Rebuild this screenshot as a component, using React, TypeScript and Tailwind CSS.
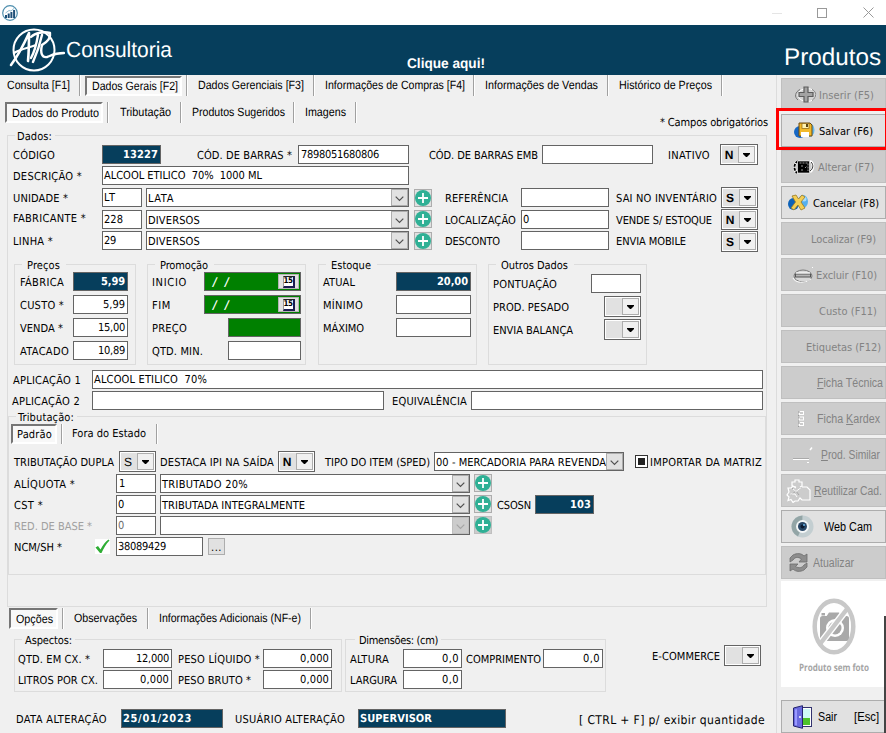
import React, { useLayoutEffect, useRef } from "react";
import clsx from "clsx";

interface BoxProps {
  className?: string;
  children?: React.ReactNode;
}

// Spreads its text evenly over the width given by the class name
const Txt: React.FC<BoxProps> = ({ className, children }) => {
  const box = useRef<HTMLSpanElement>(null);
  const inner = useRef<HTMLSpanElement>(null);

  useLayoutEffect(() => {
    if (!box.current || !inner.current) return;
    inner.current.style.letterSpacing = "0px";
    const free =
      box.current.getBoundingClientRect().width -
      inner.current.getBoundingClientRect().width;
    const count = inner.current.textContent?.length ?? 1;
    inner.current.style.letterSpacing = `${free / count}px`;
  });

  return (
    <span ref={box} className={clsx("block shrink-0 pt-[2px] whitespace-pre", className)}>
      <span ref={inner}>{children}</span>
    </span>
  );
};

// Same, but narrows the glyphs and leaves the spacing alone
const Slim: React.FC<BoxProps> = ({ className, children }) => {
  const box = useRef<HTMLSpanElement>(null);
  const inner = useRef<HTMLSpanElement>(null);

  useLayoutEffect(() => {
    if (!box.current || !inner.current) return;
    inner.current.style.transform = "none";
    const ratio =
      box.current.getBoundingClientRect().width /
      inner.current.getBoundingClientRect().width;
    inner.current.style.transform = `scaleX(${ratio})`;
  });

  return (
    <span ref={box} className={clsx("block shrink-0 whitespace-pre", className)}>
      <span ref={inner} className="inline-block origin-left">
        {children}
      </span>
    </span>
  );
};

const Field: React.FC<BoxProps> = ({ className, children }) => (
  <div
    className={clsx(
      "flex h-[19px] shrink-0 items-center border border-[#646464] pb-px leading-[14px]",
      className
    )}
  >
    {children}
  </div>
);

const Chevron: React.FC<{ disabled?: boolean }> = ({ disabled }) => (
  <span
    className={clsx(
      "ml-auto flex h-[17px] w-[17px] shrink-0 items-center justify-center border",
      disabled ? "border-[#bfbfbf] bg-[#ccc]" : "border-[#adadad] bg-[#e1e1e1]"
    )}
  >
    <svg width="9" height="6" viewBox="0 0 9 6" className="mt-[3px]">
      <path
        d="M0.7 0.7L4.5 4.5L8.3 0.7"
        fill="none"
        stroke={disabled ? "#a5a5a5" : "#505050"}
        strokeWidth="1.2"
      />
    </svg>
  </span>
);

const Select: React.FC<BoxProps & { disabled?: boolean }> = ({
  className,
  children,
  disabled,
}) => (
  <Field className={clsx("bg-white !pb-0 pl-px", className)}>
    {children}
    <Chevron disabled={disabled} />
  </Field>
);

const Combo: React.FC<{ value?: string; className?: string; thin?: boolean }> = ({
  value,
  className,
  thin,
}) => (
  <div
    className={clsx(
      "flex h-[21px] w-[37px] shrink-0 border border-[#646464] bg-white p-px",
      className
    )}
  >
    <span
      className={clsx(
        "flex w-[16px] items-center justify-center bg-[#e1e1e1] pr-[2px] font-['Liberation_Sans'] text-[12px]",
        !thin && "font-bold"
      )}
    >
      {value}
    </span>
    <span className="flex w-[17px] items-center justify-center border border-[#adadad] bg-[#f0f0f0]">
      <svg width="7" height="4" viewBox="0 0 7 4">
        <path d="M0 0H7V1L4 4H3L0 1Z" fill="#000" />
      </svg>
    </span>
  </div>
);

const PlusButton: React.FC<{ disabled?: boolean; className?: string }> = ({
  disabled,
  className,
}) => (
  <span
    className={clsx(
      "flex h-[18px] w-[18px] shrink-0 border",
      disabled ? "border-[#bfbfbf] bg-[#ccc]" : "border-[#adadad] bg-[#e1e1e1]",
      className
    )}
  >
    <svg width="16" height="16" viewBox="0 0 16 16">
      <circle cx="8" cy="8" r="8" fill="#2fb095" />
      <path d="M8 3V13M3 8H13" stroke="#fff" strokeWidth="1.8" />
    </svg>
  </span>
);

const Group: React.FC<BoxProps & { title: string; legend: string; text: string }> = ({
  title,
  legend,
  text,
  className,
  children,
}) => (
  <fieldset className={clsx("min-w-0 shrink-0 border border-[#dcdcdc]", className)}>
    <legend className={clsx("block h-[13px] leading-[13px]", legend)}>
      <Txt className={clsx("!pt-px", text)}>{title}</Txt>
    </legend>
    {children}
  </fieldset>
);

const ActiveTab: React.FC<BoxProps> = ({ className, children }) => (
  <div
    className={clsx(
      "shrink-0 border-2 border-t-[#767676] border-r-white border-b-white border-l-[#767676] bg-[#f8f8f8]",
      className
    )}
  >
    {children}
  </div>
);

const Sep: React.FC<{ className?: string }> = ({ className }) => (
  <span
    className={clsx("block w-[2px] shrink-0 border-l border-[#a0a0a0] bg-white", className)}
  />
);

const DateField: React.FC<{ className?: string }> = ({ className }) => (
  <Field className={clsx("w-[97px] bg-[#008000] !pb-0 pl-[8px] text-white", className)}>
    <span className="w-[6px] text-[12px] font-bold italic">/</span>
    <span className="ml-[6px] w-[6px] text-[12px] font-bold italic">/</span>
    <span className="ml-auto mr-px flex h-[15px] w-[21px] items-center justify-center border border-[#b4b4b4] bg-[#e1e1e1]">
      <span className="flex h-[12px] w-[12px] items-center justify-center border-t border-r-2 border-b-2 border-l border-t-[#222] border-r-[#1c1c50] border-b-[#1c1c50] border-l-[#999] bg-white text-[8px] font-bold leading-none tracking-[-0.5px] text-black">
        15
      </span>
    </span>
  </Field>
);

const SideButton: React.FC<BoxProps & { disabled?: boolean }> = ({
  disabled,
  className,
  children,
}) => (
  <button
    className={clsx(
      "flex h-[33px] w-[105px] shrink-0 items-center border text-left",
      disabled
        ? "border-[#bfbfbf] bg-[#ccc] text-[#838383]"
        : "border-[#adadad] bg-[#e1e1e1] text-black",
      className
    )}
  >
    {children}
  </button>
);

const InsertIcon = () => (
  <svg width="22" height="18" viewBox="0 0 22 18">
    <ellipse cx="12" cy="9" rx="9" ry="6.500" fill="#d4d4d4" stroke="#fff" />
    <path d="M5 3.500C0 6 -1 11 3 14M17 3.500C22 6 22 11 17 14.500" fill="none" stroke="#777" />
    <path
      d="M9 1H13V6.500H18V10.500H13V16H9V10.500H4V6.500H9Z"
      fill="#a2a2a2"
      stroke="#5c5c5c"
      strokeWidth="1.2"
    />
  </svg>
);

const SaveIcon = () => (
  <svg width="22" height="18" viewBox="0 0 22 18">
    <ellipse cx="6" cy="10" rx="6" ry="6" fill="#1667c4" />
    <ellipse cx="15" cy="8" rx="5.5" ry="7" fill="#66b8ee" />
    <path d="M5 1H16L18 3V14H5Z" fill="#f2b92a" stroke="#6b4a10" />
    <rect x="8" y="1.5" width="7" height="5" fill="#fff2b0" stroke="#8a6010" strokeWidth=".7" />
    <rect x="12" y="2" width="2" height="3" fill="#5b4413" />
    <rect x="7" y="10" width="8" height="5" fill="#fff" />
  </svg>
);

const EditIcon = () => (
  <svg width="22" height="18" viewBox="0 0 22 18">
    <path d="M5 3C1 5 0 11 4 15M17 3C21 5 21 11 17 14" fill="none" stroke="#fff" strokeWidth="2.5" />
    <path d="M5 3C1 5 0 11 4 15" fill="none" stroke="#000" strokeWidth="1.8" strokeDasharray="3 1" />
    <path d="M18 4C21 7 20 11 17 13" fill="none" stroke="#333" />
    <rect x="4.500" y="3" width="12" height="12" fill="#000" stroke="#fff" strokeWidth=".6" />
    <path d="M6.500 5H15V13M8 8H11M12 10L14 8M8 12H10" fill="none" stroke="#999" strokeDasharray="2 1" />
  </svg>
);

const CancelIcon = () => (
  <svg width="21" height="18" viewBox="0 0 21 18">
    <ellipse cx="5.5" cy="10" rx="5.5" ry="6" fill="#0e62b8" />
    <ellipse cx="15" cy="7.5" rx="5" ry="6.5" fill="#56b0ee" />
    <ellipse cx="16" cy="5" rx="2.5" ry="2.5" fill="#a9dcfa" />
    <path
      d="M4 2L8 1L10.500 5L14 1L17 3L13 8L17 14L13 16L10 11L6 16L3 14L7.500 8Z"
      fill="#f4cf55"
      stroke="#9a7a24"
      strokeWidth=".8"
    />
  </svg>
);

const DeleteIcon = () => (
  <svg width="24" height="18" viewBox="0 0 24 18">
    <ellipse cx="12" cy="10" rx="9" ry="6" fill="#d8d8d8" stroke="#777" />
    <path d="M2 12C4 17 14 18 20 13" fill="none" stroke="#fff" />
    <rect x="4.500" y="8" width="15" height="3" fill="#b5b5b5" stroke="#555" />
    <path d="M5 7H19" stroke="#fff" />
    <path d="M21 1.500H22" stroke="#fff" />
  </svg>
);

const KardexIcon = () => (
  <svg width="7" height="17" viewBox="0 0 7 17">
    {[1, 6.5, 12].map((y) => (
      <g key={y}>
        <rect x="1.500" y={y + 0.5} width="4" height="3" fill="#ccc" stroke="#fff" />
        <path d="M1 0V2M0.500 4V5" transform={`translate(0 ${y})`} stroke="#999" />
      </g>
    ))}
  </svg>
);

const SimilarIcon = () => (
  <svg width="21" height="18" viewBox="0 0 21 18">
    <path d="M0 13.500H16M14 16.500H16" stroke="#fff" />
    <path d="M0 12.500H16" stroke="#aaa" />
    <path d="M17 4L19 1.500" stroke="#fff" strokeWidth="1.500" />
  </svg>
);

const ReuseIcon = () => (
  <svg width="25" height="24" viewBox="0 0 25 24">
    <path
      d="M10 8L6 7V3H9V1H13V3H16V7L14 8M16 8H21L24 11V21H16L14 19L12 22H9L7 23.500L5 20.500L2 21.500L3 18L1 16L3 13L2 9L5 9L7 7L10 9"
      fill="none"
      stroke="#fff"
      strokeWidth="1.200"
    />
    <path d="M6 9L10 13L15 8M5 16L10 12L13 16" fill="none" stroke="#a5a5a5" />
    <path d="M7 10L10 12.500L15 8.500M4.500 15L9 15L11 18" fill="none" stroke="#fff" />
  </svg>
);

const WebcamIcon = () => (
  <svg width="23" height="23" viewBox="0 0 23 23">
    <circle cx="11.500" cy="11.500" r="11" fill="#c3ced1" />
    <path d="M11.500 .5A11 11 0 0 0 7 21.500L11 12Z" fill="#93a5a6" />
    <circle cx="11.500" cy="11.500" r="6.500" fill="#f4f7f8" />
    <circle cx="11.500" cy="11.500" r="4.500" fill="#294766" />
    <circle cx="11.500" cy="11.500" r="2" fill="#0b1a30" />
    <circle cx="13" cy="10" r="1" fill="#68b5e8" />
  </svg>
);

const RefreshIcon = () => (
  <svg width="19" height="19" viewBox="0 0 19 19">
    <path
      d="M1 9V5L4 2C8 0 12 0 15 3L18 1V9H10L12.500 6C9 3.500 6 4 4 7Z"
      fill="#8d8d8d"
      stroke="#6d6d6d"
      strokeWidth=".8"
    />
    <path
      d="M18 10V14L15 17C11 19 7 19 4 16L1 18V11H9L6.500 13.500C10 15.500 13 15 15 12Z"
      fill="#8d8d8d"
      stroke="#6d6d6d"
      strokeWidth=".8"
    />
  </svg>
);

const NoPhotoIcon = () => (
  <svg width="44" height="57" viewBox="0 0 44 57">
    <rect x="8" y="18" width="29" height="25" rx="2.500" fill="#a9a9a9" />
    <path d="M14 19L17 14.500H27L30 19ZM9.500 15H13V17.500H9.500Z" fill="#a9a9a9" />
    <circle cx="23" cy="30" r="9" fill="#fff" />
    <circle cx="23" cy="30" r="6.500" fill="#a9a9a9" />
    <path d="M8 46L35 11" stroke="#fff" strokeWidth="7" />
    <path d="M8 46L35 11" stroke="#c8c8c8" strokeWidth="4.500" />
    <ellipse cx="22" cy="28.500" rx="19.300" ry="25.800" fill="none" stroke="#c8c8c8" strokeWidth="4.500" />
  </svg>
);

const ExitIcon = () => (
  <svg width="19" height="24" viewBox="0 0 19 24">
    <rect x="7.500" y="2.500" width="11" height="19" fill="#fff" stroke="#33336f" />
    <rect x="10" y="4" width="7" height="9" fill="#cffaf6" />
    <rect x="10" y="13" width="7" height="7" fill="#4dc22a" />
    <path d="M.5 3L9.500 .7V23.300L.5 21Z" fill="#6a6ade" stroke="#24246e" />
    <path d="M2 4.500L4 4V20.500L2 20Z" fill="#9a9aff" />
    <circle cx="7" cy="12" r="1" fill="#fff" />
  </svg>
);

const ui = "font-['DejaVu_Sans_Condensed','DejaVu_Sans',sans-serif] text-[11px]";
const ms = "font-['Liberation_Sans',sans-serif] text-[12px]";
const navy = "bg-[#063e5c] font-bold text-white";

const TitleBar = () => (
  <div className="flex h-[25px] items-center bg-white pl-[2px]">
    <svg width="16" height="16" viewBox="0 0 16 16">
      <circle cx="8" cy="8" r="7.300" fill="#fff" stroke="#4f8fae" strokeWidth="1.200" />
      <path d="M4 13V10M6.700 13V8.500M9.400 13V7M12.100 13V5" stroke="#1d4f78" strokeWidth="2" />
      <path d="M3.500 8L7 5.500L9 6L12.500 3" fill="none" stroke="#74a9c4" strokeWidth=".8" />
    </svg>
    <svg width="10" height="10" viewBox="0 0 10 10" className="ml-[754px]">
      <path d="M0 5.500H10" stroke="#e5e5e5" />
    </svg>
    <svg width="10" height="10" viewBox="0 0 10 10" className="ml-[35px]">
      <rect x=".5" y=".5" width="9" height="9" fill="none" stroke="#999" />
    </svg>
    <svg width="11" height="11" viewBox="0 0 11 11" className="ml-[36px]">
      <path d="M.5 .5L10.500 10.500M10.500 .5L.5 10.500" stroke="#999" />
    </svg>
  </div>
);

const Header = () => (
  <div className="flex h-[50px] bg-[#063e5c] pl-[9px] font-['Liberation_Sans',sans-serif] text-white">
    <svg width="56" height="46" viewBox="0 0 56 46" className="mt-[2px] shrink-0">
      <g fill="none" stroke="#fff" strokeLinecap="round" strokeLinejoin="round">
        <circle cx="25" cy="23" r="20.500" strokeWidth="2" />
        <path d="M2 38C8 30 15 17 20 6C20 16 20 24 19 34" strokeWidth="2.600" />
        <path d="M5 26C11 22 19 21 27 18" strokeWidth="2.200" />
        <path d="M22 31C26 24 28 14 29 8M22 10C26 6 35 4 41 6C42 11 38 15 33 18" strokeWidth="2.400" />
        <path d="M33 8C31 17 28 26 24 35M33 18C31 26 33 31 38 30C42 29 44 26 55 26" strokeWidth="2.400" />
      </g>
    </svg>
    <Slim className="ml-[1px] mt-[12px] h-[26px] w-[106px] text-[22px] leading-[26px]">
      Consultoria
    </Slim>
    <Slim className="ml-[235px] mt-[30px] w-[78px] text-[14px] font-bold leading-[16px]">
      Clique aqui!
    </Slim>
    <Slim className="ml-[299px] mt-[18px] w-[97px] text-[24px] leading-[30px]">Produtos</Slim>
  </div>
);

const MainTabs = () => (
  <div className={clsx("flex h-[27px] pl-[7px] leading-[20px]", ms)}>
    <Slim className="w-[63px]">Consulta [F1]</Slim>
    <Sep className="ml-[9px] h-[21px]" />
    <ActiveTab className="ml-[4px] mt-px h-[20px] w-[97px] pl-[5px] leading-[17px]">
      <Slim className="w-[86px]">Dados Gerais [F2]</Slim>
    </ActiveTab>
    <Sep className="ml-[4px] h-[21px]" />
    <Slim className="ml-[10px] w-[106px]">Dados Gerenciais [F3]</Slim>
    <Sep className="ml-[9px] h-[21px]" />
    <Slim className="ml-[10px] w-[140px]">Informações de Compras [F4]</Slim>
    <Sep className="ml-[8px] h-[21px]" />
    <Slim className="ml-[10px] w-[113px]">Informações de Vendas</Slim>
    <Sep className="ml-[9px] h-[21px]" />
    <Slim className="ml-[10px] w-[93px]">Histórico de Preços</Slim>
    <Sep className="ml-[9px] h-[21px]" />
  </div>
);

const SubTabs = () => (
  <div className={clsx("flex h-[27px] pl-[5px] leading-[20px]", ms)}>
    <ActiveTab className="h-[21px] w-[98px] pl-[5px] leading-[18px]">
      <Slim className="w-[87px]">Dados do Produto</Slim>
    </ActiveTab>
    <Sep className="ml-[4px] h-[21px]" />
    <Slim className="ml-[11px] w-[51px]">Tributação</Slim>
    <Sep className="ml-[9px] h-[21px]" />
    <Slim className="ml-[10px] w-[93px]">Produtos Sugeridos</Slim>
    <Sep className="ml-[8px] h-[21px]" />
    <Slim className="ml-[10px] w-[41px]">Imagens</Slim>
    <Sep className="ml-[9px] h-[21px]" />
    <Txt className={clsx("ml-[303px] mt-[12px] w-[108px] !leading-[14px]", ui)}>
      * Campos obrigatórios
    </Txt>
  </div>
);

const ProductRows = () => (
  <>
    <div className="mt-[2px] flex h-[21px] items-center pl-[5px]">
      <Txt className="w-[42px]">CÓDIGO</Txt>
      <Field className={clsx("ml-[47px] w-[59px] justify-end pr-[2px]", navy)}>
        <Txt className="w-[35px]">13227</Txt>
      </Field>
      <Txt className="ml-[36px] w-[95px]">CÓD. DE BARRAS *</Txt>
      <Field className="ml-[6px] w-[111px] bg-white pl-[2px]">
        <Txt className="w-[78px]">7898051680806</Txt>
      </Field>
      <Txt className="ml-[20px] w-[109px]">CÓD. DE BARRAS EMB</Txt>
      <Field className="ml-[4px] w-[111px] bg-white" />
      <Txt className="ml-[15px] w-[42px]">INATIVO</Txt>
      <Combo className="ml-[10px] !w-[38px]" value="N" />
    </div>
    <div className="mt-px flex h-[19px] items-center pl-[5px]">
      <Txt className="w-[69px]">DESCRIÇÃO *</Txt>
      <Field className="ml-[20px] w-[307px] bg-white pl-px">
        <Txt className="w-[158px]">ALCOOL ETILICO  70%  1000 ML</Txt>
      </Field>
    </div>
    <div className="mt-[2px] flex h-[21px] items-center pl-[5px]">
      <Txt className="w-[55px]">UNIDADE *</Txt>
      <Field className="ml-[34px] w-[40px] bg-white pl-px">
        <Txt className="w-[12px]">LT</Txt>
      </Field>
      <Select className="ml-[4px] w-[263px]">
        <Txt className="w-[26px]">LATA</Txt>
      </Select>
      <PlusButton className="ml-[5px] mt-px" />
      <Txt className="ml-[13px] w-[63px]">REFERÊNCIA</Txt>
      <Field className="ml-[13px] w-[88px] bg-white" />
      <Txt className="ml-[7px] w-[101px]">SAI NO INVENTÁRIO</Txt>
      <Combo className="ml-[4px]" value="S" />
    </div>
    <div className="mt-px flex h-[21px] items-center pl-[5px]">
      <Txt className="-mt-[3px] w-[73px]">FABRICANTE *</Txt>
      <Field className="ml-[16px] w-[40px] bg-white pl-px">
        <Txt className="w-[19px]">228</Txt>
      </Field>
      <Select className="ml-[4px] w-[263px]">
        <Txt className="w-[52px]">DIVERSOS</Txt>
      </Select>
      <PlusButton className="ml-[5px] -mt-px" />
      <Txt className="ml-[13px] w-[71px]">LOCALIZAÇÃO</Txt>
      <Field className="ml-[5px] w-[88px] bg-white pl-px">
        <Txt className="w-[7px]">0</Txt>
      </Field>
      <Txt className="ml-[7px] w-[96px]">VENDE S/ ESTOQUE</Txt>
      <Combo className="ml-[9px]" value="N" />
    </div>
    <div className="flex h-[21px] items-center pl-[5px]">
      <Txt className="w-[40px]">LINHA *</Txt>
      <Field className="ml-[49px] w-[40px] bg-white pl-px">
        <Txt className="w-[12px]">29</Txt>
      </Field>
      <Select className="ml-[4px] w-[263px]">
        <Txt className="w-[52px]">DIVERSOS</Txt>
      </Select>
      <PlusButton className="ml-[5px]" />
      <Txt className="ml-[13px] w-[55px]">DESCONTO</Txt>
      <Field className="ml-[21px] w-[88px] bg-white" />
      <Txt className="ml-[7px] w-[70px]">ENVIA MOBILE</Txt>
      <Combo className="ml-[35px] mt-[2px]" value="S" />
    </div>
  </>
);

const Prices = () => (
  <Group
    title="Preços"
    legend="ml-[2px] pl-[5px] pr-[6px]"
    text="w-[33px]"
    className="h-[107px] w-[122px] pr-[7px] pl-[5px]"
  >
    <div className="mt-px flex flex-col gap-[4px]">
      <div className="flex items-center justify-between">
        <Txt className="w-[44px]">FÁBRICA</Txt>
        <Field className={clsx("w-[55px] justify-end pr-[2px]", navy)}>
          <Txt className="w-[24px]">5,99</Txt>
        </Field>
      </div>
      <div className="flex items-center justify-between">
        <Txt className="w-[44px]">CUSTO *</Txt>
        <Field className="w-[55px] justify-end bg-white pr-[2px]">
          <Txt className="w-[22px]">5,99</Txt>
        </Field>
      </div>
      <div className="flex items-center justify-between">
        <Txt className="w-[43px]">VENDA *</Txt>
        <Field className="w-[55px] justify-end bg-white pr-[2px]">
          <Txt className="w-[27px]">15,00</Txt>
        </Field>
      </div>
      <div className="flex items-center justify-between">
        <Txt className="w-[49px]">ATACADO</Txt>
        <Field className="w-[55px] justify-end bg-white pr-[2px]">
          <Txt className="w-[27px]">10,89</Txt>
        </Field>
      </div>
    </div>
  </Group>
);

const Promotion = () => (
  <Group
    title="Promoção"
    legend="ml-[3px] pl-[5px] pr-[6px]"
    text="w-[48px]"
    className="ml-[11px] h-[107px] w-[159px] pr-[4px] pl-[4px]"
  >
    <div className="mt-px flex flex-col gap-[4px]">
      <div className="flex items-center justify-between">
        <Txt className="w-[35px]">INICIO</Txt>
        <DateField />
      </div>
      <div className="flex items-center justify-between">
        <Txt className="w-[19px]">FIM</Txt>
        <DateField />
      </div>
      <div className="flex items-center justify-between">
        <Txt className="w-[35px]">PREÇO</Txt>
        <Field className="w-[73px] bg-[#008000]" />
      </div>
      <div className="flex items-center justify-between">
        <Txt className="w-[51px]">QTD. MIN.</Txt>
        <Field className="w-[73px] bg-white" />
      </div>
    </div>
  </Group>
);

const Stock = () => (
  <Group
    title="Estoque"
    legend="ml-[3px] pl-[5px] pr-[6px]"
    text="w-[40px]"
    className="ml-[12px] h-[107px] w-[159px] pr-[5px] pl-[4px]"
  >
    <div className="mt-px flex flex-col gap-[4px]">
      <div className="flex items-center justify-between">
        <Txt className="w-[32px]">ATUAL</Txt>
        <Field className={clsx("w-[75px] justify-end pr-[2px]", navy)}>
          <Txt className="w-[31px]">20,00</Txt>
        </Field>
      </div>
      <div className="flex items-center justify-between">
        <Txt className="w-[40px]">MÍNIMO</Txt>
        <Field className="w-[75px] bg-white" />
      </div>
      <div className="flex items-center justify-between">
        <Txt className="w-[41px]">MÁXIMO</Txt>
        <Field className="w-[75px] bg-white" />
      </div>
    </div>
  </Group>
);

const Others = () => (
  <Group
    title="Outros Dados"
    legend="ml-[3px] pl-[5px] pr-[6px]"
    text="w-[67px]"
    className="ml-[11px] h-[107px] w-[159px] pr-[5px] pl-[4px]"
  >
    <div className="mt-[3px] flex items-center justify-between">
      <Txt className="w-[64px]">PONTUAÇÃO</Txt>
      <Field className="w-[50px] bg-white" />
    </div>
    <div className="mt-[3px] flex items-center justify-between">
      <Txt className="w-[76px]">PROD. PESADO</Txt>
      <Combo />
    </div>
    <div className="mt-[2px] flex items-center justify-between">
      <Txt className="w-[80px]">ENVIA BALANÇA</Txt>
      <Combo />
    </div>
  </Group>
);

const Taxes = () => (
  <Group
    title="Tributação:"
    legend="ml-[7px] pl-[2px] pr-[3px]"
    text="w-[56px]"
    className="h-[165px] w-full"
  >
    <div className="mt-px flex h-[20px] pl-[2px]">
      <ActiveTab className="h-[20px] w-[46px] pl-[4px]">
        <Txt className="w-[35px]">Padrão</Txt>
      </ActiveTab>
      <Sep className="ml-[4px]" />
      <Txt className="ml-[9px] w-[74px] !pt-[3px]">Fora do Estado</Txt>
      <Sep className="ml-[10px]" />
    </div>
    <div className="mt-[7px] flex h-[21px] items-center pl-[5px]">
      <Txt className="w-[100px]">TRIBUTAÇÃO DUPLA</Txt>
      <Combo className="ml-[5px]" value="S" thin />
      <Txt className="ml-[4px] w-[114px]">DESTACA IPI NA SAÍDA</Txt>
      <Combo className="ml-[4px]" value="N" />
      <Txt className="ml-[10px] w-[105px]">TIPO DO ITEM (SPED)</Txt>
      <Select className="ml-[4px] w-[190px]">
        <Txt className="w-[170px]">00 - MERCADORIA PARA REVENDA</Txt>
      </Select>
      <span className="-mt-px ml-[11px] flex h-[13px] w-[13px] shrink-0 items-center justify-center border border-[#333] bg-white">
        <span className="h-[7px] w-[7px] bg-[#222]" />
      </span>
      <Txt className="ml-[2px] w-[112px]">IMPORTAR DA MATRIZ</Txt>
    </div>
    <div className="mt-[2px] flex h-[19px] items-center pl-[5px]">
      <Txt className="w-[61px]">ALÍQUOTA *</Txt>
      <Field className="ml-[41px] w-[40px] bg-white pl-[2px]">
        <Txt className="w-[7px]">1</Txt>
      </Field>
      <Select className="ml-[4px] w-[310px]">
        <Txt className="w-[86px]">TRIBUTADO 20%</Txt>
      </Select>
      <PlusButton className="ml-[4px] -mt-px" />
    </div>
    <div className="mt-[2px] flex h-[19px] items-center pl-[5px]">
      <Txt className="w-[29px]">CST *</Txt>
      <Field className="ml-[73px] w-[40px] bg-white pl-px">
        <Txt className="w-[7px]">0</Txt>
      </Field>
      <Select className="ml-[4px] w-[310px]">
        <Txt className="w-[143px]">TRIBUTADA INTEGRALMENTE</Txt>
      </Select>
      <PlusButton className="ml-[4px] -mt-px" />
      <Txt className="ml-[5px] w-[34px]">CSOSN</Txt>
      <Field className={clsx("ml-[4px] w-[59px] justify-end pr-[2px]", navy)}>
        <Txt className="w-[21px]">103</Txt>
      </Field>
    </div>
    <div className="mt-[2px] flex h-[19px] items-center pl-[5px]">
      <Txt className="w-[78px] text-[#a0a0a0]">RED. DE BASE *</Txt>
      <Field className="ml-[24px] w-[40px] bg-white pl-px text-[#6d6d6d]">
        <Txt className="w-[7px]">0</Txt>
      </Field>
      <Select className="ml-[4px] w-[310px]" disabled />
      <PlusButton className="ml-[4px] -mt-px" disabled />
    </div>
    <div className="mt-[2px] flex h-[19px] items-center pl-[5px]">
      <Txt className="w-[48px]">NCM/SH *</Txt>
      <span className="ml-[33px] flex h-[15px] w-[15px] shrink-0 bg-white">
        <svg width="15" height="15" viewBox="0 0 15 15">
          <path
            d="M.5 8.500L3 7L5.500 10.500C8 6 10.500 2.500 13.500 .5L14.500 1.500C11 5 8.500 9.500 6.500 14H5Z"
            fill="#2fae35"
          />
        </svg>
      </span>
      <Field className="ml-[6px] w-[87px] bg-white pl-px">
        <Txt className="w-[48px]">38089429</Txt>
      </Field>
      <span className="ml-[5px] flex h-[17px] w-[17px] shrink-0 items-center justify-center border border-[#adadad] bg-[#e1e1e1]">
        <Txt className="w-[11px]">...</Txt>
      </span>
    </div>
  </Group>
);

const OptionTabs = () => (
  <div className={clsx("mt-px flex h-[21px] pl-[9px] leading-[20px]", ms)}>
    <ActiveTab className="h-[21px] w-[49px] pl-[5px] leading-[18px]">
      <Slim className="w-[37px]">Opções</Slim>
    </ActiveTab>
    <Sep className="ml-[4px]" />
    <Slim className="ml-[10px] w-[63px]">Observações</Slim>
    <Sep className="ml-[10px]" />
    <Slim className="ml-[10px] w-[142px]">Informações Adicionais (NF-e)</Slim>
    <Sep className="ml-[9px]" />
  </div>
);

const NumberField: React.FC<{ box: string; text: string; value: string }> = ({
  box,
  text,
  value,
}) => (
  <Field className={clsx("justify-end bg-white pr-[2px]", box)}>
    <Txt className={text}>{value}</Txt>
  </Field>
);

const Options = () => (
  <div className="mt-[4px] flex h-[59px] pl-[14px]">
    <Group
      title="Aspectos:"
      legend="ml-[4px] pl-[3px] pr-[3px]"
      text="w-[47px]"
      className="w-[328px] pl-[3px]"
    >
      <div className="mt-[3px] flex h-[19px] items-center">
        <Txt className="w-[72px]">QTD. EM CX. *</Txt>
        <NumberField box="ml-[13px] w-[69px]" text="w-[33px]" value="12,000" />
        <Txt className="ml-[6px] w-[82px]">PESO LÍQUIDO *</Txt>
        <NumberField box="ml-[3px] w-[69px]" text="w-[29px]" value="0,000" />
      </div>
      <div className="mt-[2px] flex h-[19px] items-center">
        <Txt className="w-[80px]">LITROS POR CX.</Txt>
        <NumberField box="ml-[5px] w-[69px]" text="w-[29px]" value="0,000" />
        <Txt className="ml-[6px] w-[73px]">PESO BRUTO *</Txt>
        <NumberField box="ml-[12px] w-[69px]" text="w-[29px]" value="0,000" />
      </div>
    </Group>
    <Group
      title="Dimensões: (cm)"
      legend="ml-[5px] pl-[4px] pr-[3px]"
      text="w-[79px]"
      className="ml-[3px] w-[261px] pl-[4px]"
    >
      <div className="mt-[3px] flex h-[19px] items-center">
        <Txt className="w-[39px]">ALTURA</Txt>
        <NumberField box="ml-[14px] w-[59px]" text="w-[17px]" value="0,0" />
        <Txt className="ml-[4px] w-[75px]">COMPRIMENTO</Txt>
        <NumberField box="ml-[2px] w-[60px]" text="w-[17px]" value="0,0" />
      </div>
      <div className="mt-[2px] flex h-[19px] items-center">
        <Txt className="w-[47px]">LARGURA</Txt>
        <NumberField box="ml-[6px] w-[59px]" text="w-[17px]" value="0,0" />
      </div>
    </Group>
    <div className="ml-[46px] mt-[12px] flex h-[21px] items-center">
      <Txt className="w-[68px]">E-COMMERCE</Txt>
      <Combo className="ml-[4px]" />
    </div>
  </div>
);

const FooterRow = () => (
  <div className="mt-[17px] flex h-[19px] items-center pl-[16px]">
    <Txt className="w-[91px]">DATA ALTERAÇÃO</Txt>
    <Field className={clsx("ml-[14px] w-[102px] pl-px", navy)}>
      <Txt className="w-[69px]">25/01/2023</Txt>
    </Field>
    <Txt className="ml-[12px] w-[110px]">USUÁRIO ALTERAÇÃO</Txt>
    <Field className={clsx("ml-[13px] w-[148px] pl-px", navy)}>
      <Txt className="w-[72px]">SUPERVISOR</Txt>
    </Field>
    <Txt className="ml-[73px] w-[186px] text-[12px]">[ CTRL + F] p/ exibir quantidade</Txt>
  </div>
);

const Sidebar = () => (
  <div className="flex w-[110px] shrink-0 flex-col border-l border-[#dcdcdc] pl-[4px] pt-[3px]">
    <div className="flex flex-col gap-[3px]">
      <SideButton disabled className="pl-[13px]">
        <InsertIcon />
        <Txt className="ml-[2px] w-[55px]">Inserir (F5)</Txt>
      </SideButton>
      <div className="relative">
        <SideButton className="pl-[12px]">
          <SaveIcon />
          <Txt className="ml-[3px] w-[54px]">Salvar (F6)</Txt>
        </SideButton>
        <span className="absolute -top-[6px] -left-[5px] h-[42px] w-[112px] border-[3px] border-[#f00]" />
      </div>
      <SideButton disabled className="pl-[11px]">
        <EditIcon />
        <Txt className="ml-[3px] w-[56px]">Alterar (F7)</Txt>
      </SideButton>
      <SideButton className="pl-[6px]">
        <CancelIcon />
        <Txt className="ml-[4px] w-[66px]">Cancelar (F8)</Txt>
      </SideButton>
      <SideButton disabled className="pl-[29px]">
        <Txt className="w-[65px]">Localizar (F9)</Txt>
      </SideButton>
      <SideButton disabled className="pl-[9px]">
        <DeleteIcon />
        <Txt className="ml-px w-[61px]">Excluir (F10)</Txt>
      </SideButton>
      <SideButton disabled className="pl-[37px]">
        <Txt className="w-[58px]">Custo (F11)</Txt>
      </SideButton>
      <SideButton disabled className="pl-[24px]">
        <Txt className="w-[75px]">Etiquetas (F12)</Txt>
      </SideButton>
      <SideButton disabled className={clsx("pl-[35px]", ms)}>
        <Slim className="w-[66px]">
          <u>F</u>icha Técnica
        </Slim>
      </SideButton>
      <SideButton disabled className={clsx("pl-[16px]", ms)}>
        <KardexIcon />
        <Slim className="ml-[12px] w-[63px]">
          Ficha <u>K</u>ardex
        </Slim>
      </SideButton>
      <SideButton disabled className={clsx("pl-[11px]", ms)}>
        <SimilarIcon />
        <Slim className="ml-[7px] w-[59px]">
          <u>P</u>rod. Similar
        </Slim>
      </SideButton>
      <SideButton disabled className={clsx("pl-[4px]", ms)}>
        <ReuseIcon />
        <Slim className="ml-[3px] w-[68px]">
          <u>R</u>eutilizar Cad.
        </Slim>
      </SideButton>
      <SideButton className={clsx("pl-[9px]", ms)}>
        <WebcamIcon />
        <Slim className="ml-[10px] w-[48px]">Web Cam</Slim>
      </SideButton>
      <SideButton disabled className={clsx("pl-[7px]", ms)}>
        <RefreshIcon />
        <Slim className="ml-[5px] w-[41px]">Atualizar</Slim>
      </SideButton>
    </div>
    <div className="relative mt-[2px] flex h-[106px] w-[105px] flex-col items-center bg-white pt-[17px]">
      <NoPhotoIcon />
      <Slim className="mt-[5px] w-[70px] font-['Open_Sans'] text-[10px] font-bold leading-[14px] text-[#a5a5a5]">
        Produto sem foto
      </Slim>
      <span className="absolute top-[35px] right-0 h-[118px] w-[2px] bg-[#444]" />
    </div>
    <SideButton className={clsx("mt-[13px] pl-[11px]", ms)}>
      <ExitIcon />
      <Slim className="ml-[6px] w-[19px]">Sair</Slim>
      <Slim className="ml-[17px] w-[25px]">[Esc]</Slim>
    </SideButton>
  </div>
);

const App = () => (
  <div
    className={clsx(
      "flex h-[733px] w-[886px] flex-col overflow-hidden bg-[#f0f0f0] leading-[14px] text-black [text-rendering:geometricPrecision]",
      ui
    )}
  >
    <TitleBar />
    <Header />
    <div className="flex h-[658px]">
      <div className="w-[776px] shrink-0">
        <MainTabs />
        <SubTabs />
        <Group
          title="Dados:"
          legend="ml-[7px] pl-[2px] pr-[3px]"
          text="w-[35px]"
          className="ml-[7px] h-[478px] w-[760px]"
        >
          <ProductRows />
          <div className="mt-[7px] flex pl-[6px]">
            <Prices />
            <Promotion />
            <Stock />
            <Others />
          </div>
          <div className="mt-[5px] flex h-[19px] items-center pl-[5px]">
            <Txt className="w-[68px]">APLICAÇÃO 1</Txt>
            <Field className="ml-[11px] w-[671px] bg-white pl-px">
              <Txt className="w-[113px]">ALCOOL ETILICO  70%</Txt>
            </Field>
          </div>
          <div className="mt-[2px] flex h-[19px] items-center pl-[4px]">
            <Txt className="w-[68px]">APLICAÇÃO 2</Txt>
            <Field className="ml-[12px] w-[292px] bg-white" />
            <Txt className="ml-[8px] w-[75px]">EQUIVALÊNCIA</Txt>
            <Field className="ml-[4px] w-[292px] bg-white" />
          </div>
          <Taxes />
        </Group>
        <OptionTabs />
        <Options />
        <FooterRow />
      </div>
      <Sidebar />
    </div>
  </div>
);

export default App;
